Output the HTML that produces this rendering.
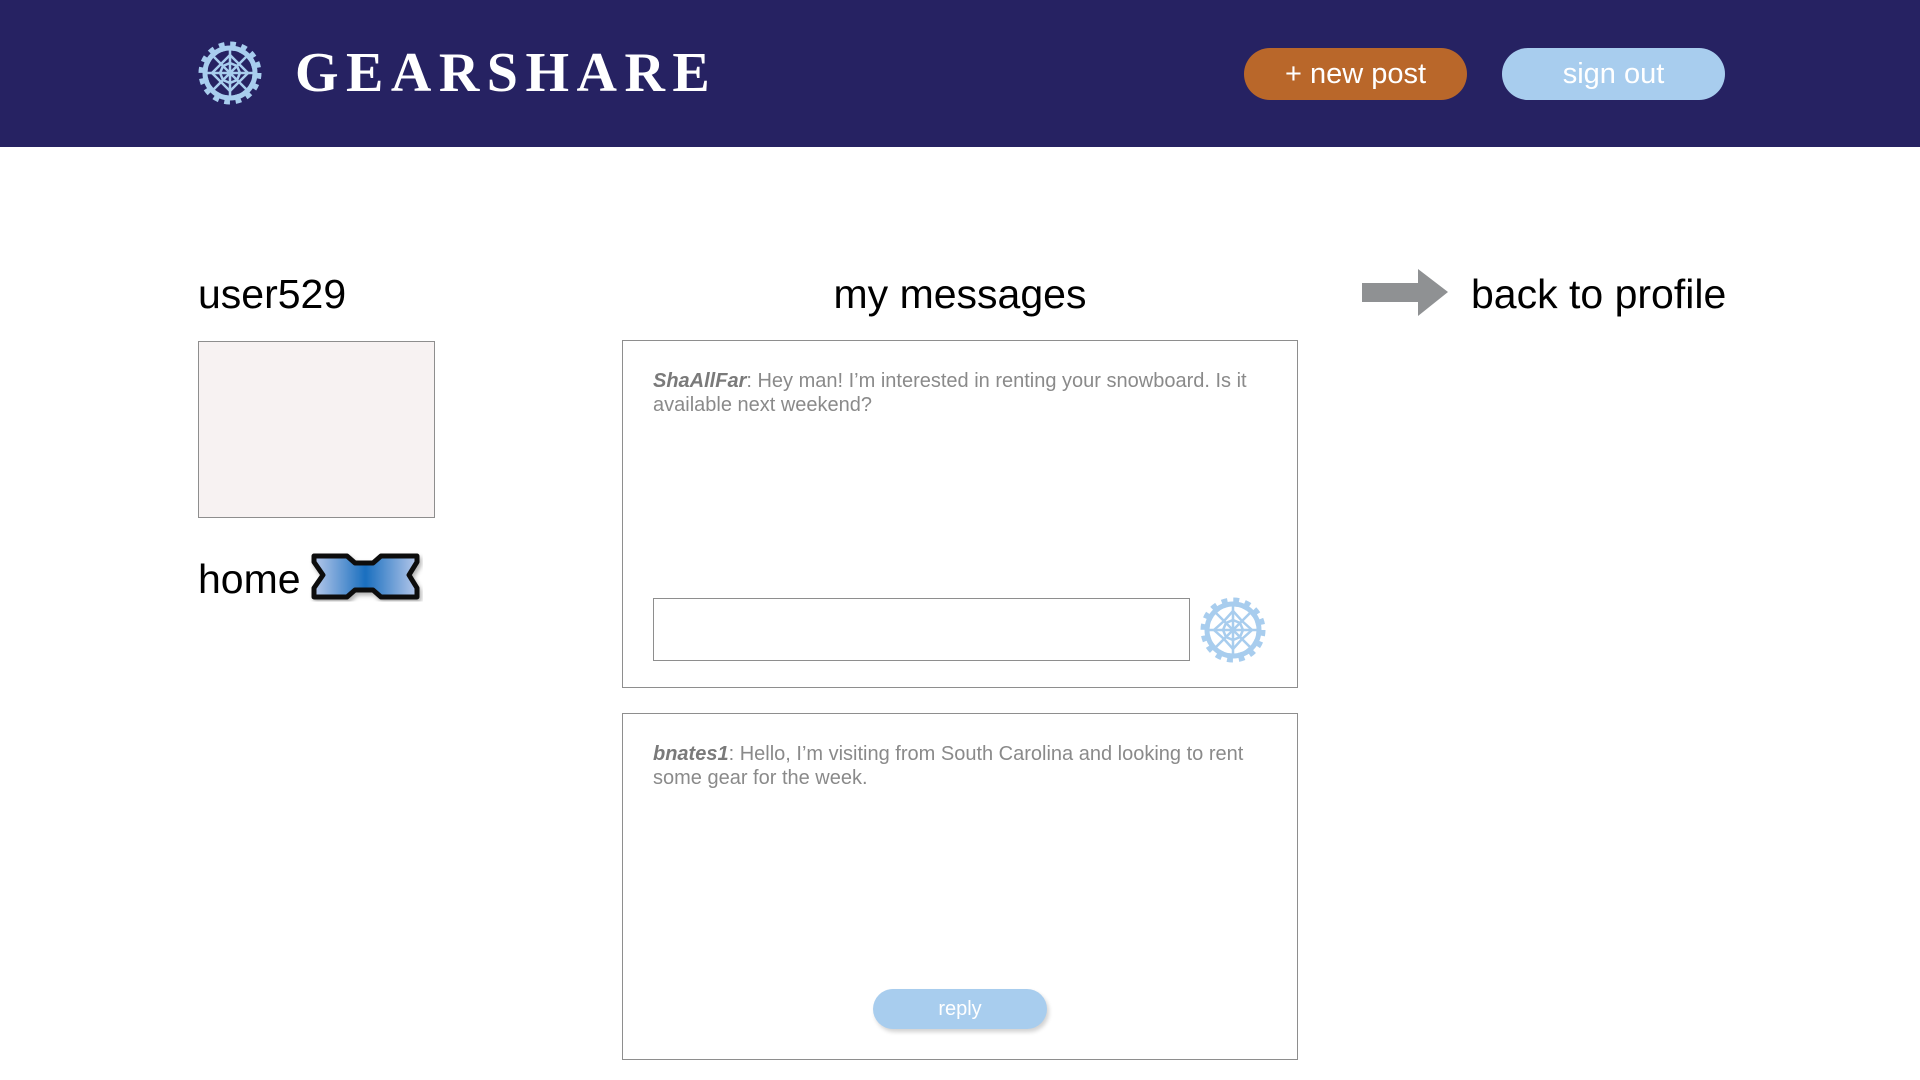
<!DOCTYPE html>
<html><head><meta charset="utf-8"><style>
*{margin:0;padding:0;box-sizing:border-box}
body{width:1920px;height:1080px;background:#fff;position:relative;overflow:hidden;font-family:"Liberation Sans",Arial,sans-serif}
.hdr{position:absolute;left:0;top:0;width:1920px;height:147px;background:#262262}
.abs{position:absolute}
.brand{left:295px;top:41px;font-family:"Liberation Serif",serif;font-weight:bold;font-size:56px;color:#fff;letter-spacing:7.5px;line-height:64px}
.btn{position:absolute;border-radius:26px;color:#fff;text-align:center;font-size:29px}
.t{color:#000;font-size:41px;line-height:46px}
.box{position:absolute;border:1.5px solid #8e8e8e;background:#fff}
.msg{position:absolute;left:30px;top:28px;width:610px;font-size:20px;line-height:24px;color:#8a8a8a}
.msg b{font-style:italic;color:#7a7a7a}
</style></head><body>
<div class="hdr"></div>
<svg class="abs" style="left:196px;top:39px" width="68" height="68" viewBox="-34 -34 68 68">
<g fill="none" stroke="#a8cdee">
<circle r="27" stroke-width="9" stroke-dasharray="5.3 5.3"/>
<circle r="25" stroke-width="5"/>
<g stroke-width="2.5">
<path d="M0-23L0 23M-23 0L23 0M-16-16L16 16M16-16L-16 16"/>
<path d="M0-18L9-9L18 0L9 9L0 18L-9 9L-18 0L-9-9Z"/>
<path d="M0-10L7-7L10 0L7 7L0 10L-7 7L-10 0L-7-7Z"/>
</g></g></svg>
<div class="abs brand">GEARSHARE</div>
<div class="btn" style="left:1244px;top:48px;width:223px;height:52px;background:#b9672a;line-height:52px">+ new post</div>
<div class="btn" style="left:1502px;top:48px;width:223px;height:52px;background:#a8cdee;line-height:52px">sign out</div>

<div class="abs t" style="left:198px;top:271px">user529</div>
<div class="abs" style="left:198px;top:341px;width:237px;height:177px;background:#f7f2f2;border:1.5px solid #8e8e8e"></div>
<div class="abs t" style="left:198px;top:556px">home</div>
<svg class="abs" style="left:309px;top:551px" width="114" height="56" viewBox="0 0 114 56">
<defs><linearGradient id="g" x1="0" x2="1"><stop offset="0" stop-color="#b6c8ea"/><stop offset=".5" stop-color="#1a6fbf"/><stop offset="1" stop-color="#b6c8ea"/></linearGradient>
<filter id="s"><feDropShadow dx="2" dy="3" stdDeviation="2" flood-opacity=".3"/></filter></defs>
<path filter="url(#s)" d="M5 5L38 5L46 12L64 12L72 5L108 5L108 11L100 24L108 37L108 46L72 46L64 39L46 39L38 46L5 46L5 37L14 24L5 11Z" fill="url(#g)" stroke="#111" stroke-width="5" stroke-linejoin="round"/>
</svg>

<div class="abs t" style="left:760px;top:271px;width:400px;text-align:center">my messages</div>
<svg class="abs" style="left:1362px;top:269px" width="86" height="47"><path d="M0 14H56V0L86 23L56 47V33H0Z" fill="#8f9193"/></svg>
<div class="abs t" style="left:1471px;top:271px">back to profile</div>

<div class="box" style="left:622px;top:340px;width:676px;height:348px">
<div class="msg"><b>ShaAllFar</b>: Hey man! I’m interested in renting your snowboard. Is it available next weekend?</div>
<div class="abs" style="left:30px;top:257px;width:537px;height:63px;border:1.5px solid #8e8e8e"></div>
<svg class="abs" style="left:576px;top:255px" width="68" height="68" viewBox="-34 -34 68 68">
<g fill="none" stroke="#a8cdee">
<circle r="28" stroke-width="9" stroke-dasharray="5.5 5.5"/>
<circle r="26" stroke-width="5"/>
<g stroke-width="2.5">
<path d="M0-24L0 24M-24 0L24 0M-17-17L17 17M17-17L-17 17"/>
<path d="M0-19L9-9L19 0L9 9L0 19L-9 9L-19 0L-9-9Z"/>
<path d="M0-10L7-7L10 0L7 7L0 10L-7 7L-10 0L-7-7Z"/>
</g></g></svg>
</div>
<div class="box" style="left:622px;top:713px;width:676px;height:347px">
<div class="msg" style="top:28px"><b>bnates1</b>: Hello, I’m visiting from South Carolina and looking to rent some gear for the week.</div>
<div class="abs" style="left:250px;top:275px;width:174px;height:40px;border-radius:20px;background:#a8cdee;color:#fff;text-align:center;line-height:40px;font-size:20px;box-shadow:2px 3px 4px rgba(0,0,0,.18)">reply</div>
</div>
</body></html>
